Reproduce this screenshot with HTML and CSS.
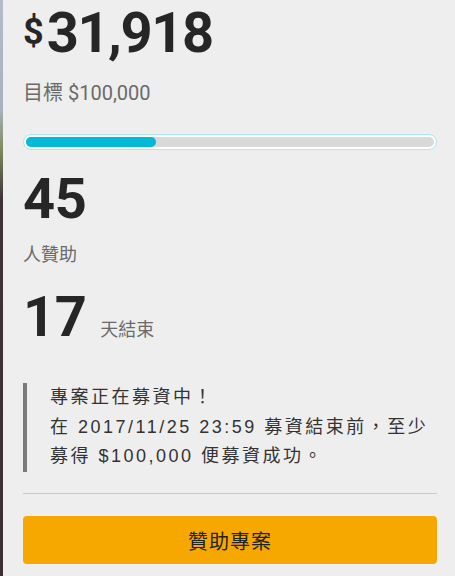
FILE: index.html
```html
<!DOCTYPE html>
<html lang="zh-Hant">
<head>
<meta charset="utf-8">
<title>募資進度</title>
<link rel="stylesheet" href="styles.css">
</head>
<body>
<div class="frame">
  <div class="edge"></div>
  <main class="panel">
    <div class="amount"><span class="cur">$</span>31,918</div>
    <div class="goal">目標 $100,000</div>
    <div class="progress"><div class="track"><div class="fill" style="width: 31.918%"></div></div></div>
    <div class="stat">45</div>
    <div class="label">人贊助</div>
    <div class="stat days">17<span class="unit">天結束</span></div>
    <blockquote class="notice">專案正在募資中！<br>在 2017/11/25 23:59 募資結束前，至少<br>募得 $100,000 便募資成功。</blockquote>
    <hr class="divider">
    <button class="back-btn" type="button">贊助專案</button>
  </main>
</div>
</body>
</html>
```

FILE: styles.css
```css
html, body {
  margin: 0;
  padding: 0;
  background: #ffffff;
}

.frame {
  display: flex;
  width: 455px;
  height: 576px;
  overflow: hidden;
}

.edge {
  width: 3px;
  flex: none;
  background: linear-gradient(to bottom, #b3bcc8 0, #a7b2bd 110px, #7d8a5c 150px, #3d3238 200px, #3a3036 100%);
}

.panel {
  flex: 1;
  background: #eeeeee;
  padding: 0 18px 0 20px;
  font-family: Roboto, "Noto Sans CJK TC", sans-serif;
  color: #262626;
}

.amount {
  margin-top: 5px;
  font-size: 56px;
  line-height: 56px;
  font-weight: 700;
  letter-spacing: -1.4px;
}

.cur {
  font-size: 36px;
  line-height: 1;
  vertical-align: 8px;
  margin-right: 3px;
  letter-spacing: 0;
}

.goal {
  margin-top: 20px;
  font-size: 20px;
  line-height: 24px;
  color: #6a6a6a;
}

.progress {
  margin-top: 29px;
  border: 1px solid #a6e9ef;
  background: #ffffff;
  padding: 2px;
  border-radius: 9px;
}

.track {
  height: 10px;
  background: #d9d9d9;
  border-radius: 5px;
}

.fill {
  height: 100%;
  background: #02bad7;
  border-radius: 5px;
}

.stat {
  margin-top: 21px;
  font-size: 56px;
  line-height: 56px;
  font-weight: 700;
  letter-spacing: -0.5px;
}

.label {
  margin-top: 16px;
  font-size: 18px;
  line-height: 24px;
  color: #6a6a6a;
}

.days {
  margin-top: 22px;
}

.unit {
  margin-left: 14px;
  font-size: 18px;
  line-height: 1;
  font-weight: 400;
  color: #6a6a6a;
  letter-spacing: 0;
}

.notice {
  margin: 38px 0 0;
  padding: 0 0 0 23px;
  border-left: 4px solid #7a7a7a;
  font-family: "Liberation Sans", "Noto Sans CJK TC", sans-serif;
  font-size: 18px;
  line-height: 29.7px;
  letter-spacing: 2.5px;
  color: #333333;
  white-space: nowrap;
}

.divider {
  margin: 21px 0 0;
  border: 0;
  border-top: 1px solid #c9c9c9;
  height: 0;
}

.back-btn {
  display: block;
  width: 100%;
  height: 48px;
  margin-top: 22px;
  border: 0;
  border-radius: 4px;
  background: #f7a800;
  color: #222222;
  font-family: "Noto Sans CJK TC", sans-serif;
  font-size: 20px;
  letter-spacing: 1px;
}
```
